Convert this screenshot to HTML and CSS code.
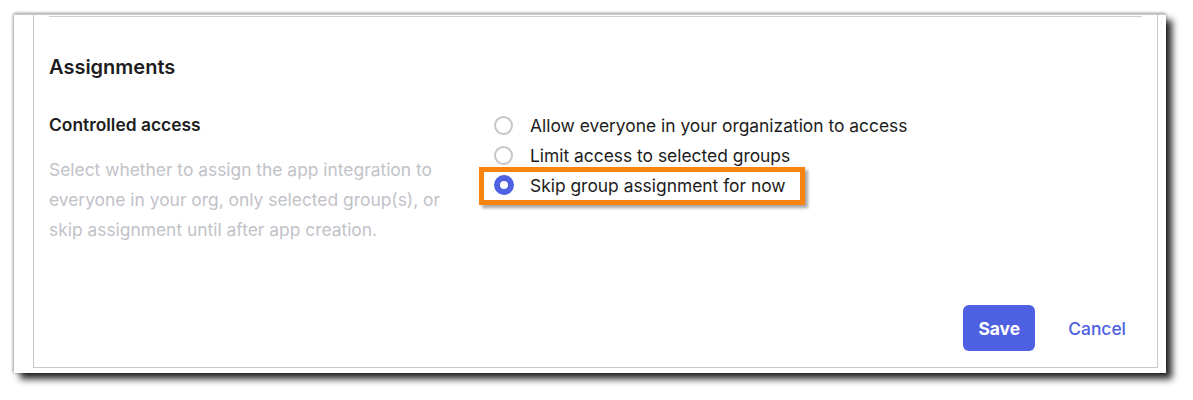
FILE: index.html
```html
<!DOCTYPE html>
<html lang="en">
<head>
<meta charset="utf-8">
<title>Assignments</title>
<link rel="stylesheet" href="styles.css">
</head>
<body>
<div class="frame">
  <div class="panel">
    <hr class="divider">
    <h2 class="section-title">Assignments</h2>
    <div class="field-row">
      <div class="field-info">
        <div class="field-label">Controlled access</div>
        <p class="field-desc">Select whether to assign the app integration to everyone in your org, only selected group(s), or skip assignment until after app creation.</p>
      </div>
      <div class="radio-list">
        <label class="radio-row"><span class="radio"></span><span class="radio-text">Allow everyone in your organization to access</span></label>
        <label class="radio-row"><span class="radio"></span><span class="radio-text">Limit access to selected groups</span></label>
        <label class="radio-row"><span class="radio checked"></span><span class="radio-text">Skip group assignment for now</span></label>
        <div class="highlight"></div>
      </div>
    </div>
    <div class="footer">
      <button class="btn btn-primary">Save</button>
      <button class="btn btn-link">Cancel</button>
    </div>
  </div>
</div>
</body>
</html>
```
FILE: styles.css
```css
html, body {
  margin: 0;
  padding: 0;
  background: #ffffff;
}
html {
  min-height: 400px;
}
body {
  font-family: Inter, "Noto Sans", "Liberation Sans", sans-serif;
  color: #1d1d21;
  padding: 14px 0 27px 14px;
}
.frame {
  width: 1152px;
  height: 359px;
  background: #ffffff;
  box-sizing: border-box;
  border-top: 1px solid #c9c9c9;
  box-shadow: 0 -1px 3px rgba(0, 0, 0, 0.25), -1px 0 3px rgba(0, 0, 0, 0.25), 6px 6px 7px rgba(0, 0, 0, 0.85);
  padding: 0 8px 5px 19px;
  display: flex;
}
.panel {
  flex: 1;
  border-left: 1px solid #c8c8c8;
  border-right: 1px solid #c8c8c8;
  border-bottom: 1px solid #c8c8c8;
  padding: 0 15px 16px 15px;
  display: flex;
  flex-direction: column;
}
.divider {
  border: 0;
  border-top: 1px solid #cfcfcf;
  margin: 1px 0 0 0;
  height: 0;
}
.section-title {
  margin: 37px 0 0 0;
  font-size: 20px;
  line-height: 26px;
  font-weight: 600;
  color: #1d1d21;
}
.field-row {
  display: flex;
  margin-top: 30px;
}
.field-info {
  width: 445px;
}
.field-label {
  font-size: 17.4px;
  line-height: 30px;
  font-weight: 600;
  color: #1d1d21;
}
.field-desc {
  margin: 15px 0 0 0;
  font-size: 17.4px;
  line-height: 30px;
  color: #c2c2c9;
  width: 400px;
}
.radio-list {
  position: relative;
  display: flex;
  flex-direction: column;
}
.radio-row {
  display: flex;
  align-items: center;
  height: 30px;
  font-size: 17.4px;
  color: #1d1d21;
}
.radio {
  width: 19px;
  height: 19px;
  box-sizing: border-box;
  border: 2px solid #c6c6cc;
  border-radius: 50%;
  margin-right: 17px;
  background: #ffffff;
  flex: none;
}
.radio.checked {
  border: 6px solid #4d61e2;
  width: 20px;
  height: 20px;
  margin-right: 16px;
}
.highlight {
  position: absolute;
  left: -15px;
  top: 57px;
  width: 326px;
  height: 38px;
  box-sizing: border-box;
  border: 5px solid #f98510;
  box-shadow: 3px 3px 3px rgba(0, 0, 0, 0.35);
  pointer-events: none;
}
.footer {
  margin-top: auto;
  display: flex;
  justify-content: flex-end;
  align-items: center;
  gap: 17px;
}
.btn {
  font-family: inherit;
  font-size: 17.4px;
  border: 0;
  cursor: pointer;
}
.btn-primary {
  background: #4d61e2;
  color: #ffffff;
  width: 72px;
  height: 46px;
  border-radius: 6px;
  font-weight: 700;
}
.btn-link {
  background: transparent;
  color: #4d61e2;
  height: 46px;
  padding: 0 16px;
  font-weight: 500;
}
```
